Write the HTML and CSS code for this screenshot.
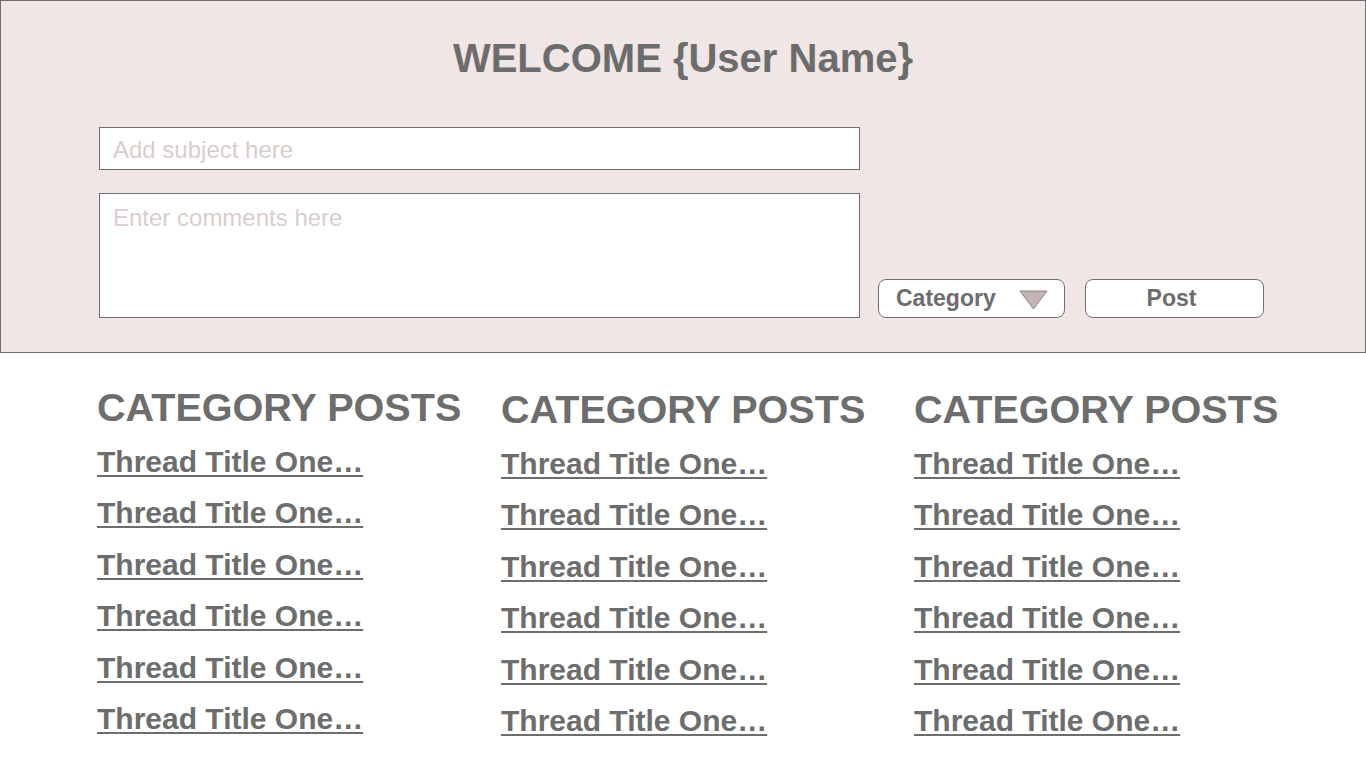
FILE: index.html
```html
<!DOCTYPE html>
<html lang="en">
<head>
<meta charset="utf-8">
<title>Forum</title>
<link rel="stylesheet" href="styles.css">
</head>
<body>
<header class="composer">
  <h1 class="welcome">WELCOME {User Name}</h1>
  <form class="composer-form">
    <div class="fields">
      <input class="subject" type="text" placeholder="Add subject here">
      <textarea class="comments" placeholder="Enter comments here"></textarea>
    </div>
    <div class="actions">
      <button type="button" class="btn btn-category">
        <span>Category</span>
        <svg class="caret" width="29" height="20" viewBox="0 0 29 20" aria-hidden="true">
          <polygon points="1,1 28,1 14.5,19" fill="#c3b4b3" stroke="#8d8484" stroke-width="1"/>
        </svg>
      </button>
      <button type="button" class="btn btn-post">Post</button>
    </div>
  </form>
</header>
<main class="categories">
  <section class="col">
    <h2 class="col-title">CATEGORY POSTS</h2>
    <ul class="threads">
      <li><a href="#">Thread Title One…</a></li>
      <li><a href="#">Thread Title One…</a></li>
      <li><a href="#">Thread Title One…</a></li>
      <li><a href="#">Thread Title One…</a></li>
      <li><a href="#">Thread Title One…</a></li>
      <li><a href="#">Thread Title One…</a></li>
    </ul>
  </section>
  <section class="col col-low">
    <h2 class="col-title">CATEGORY POSTS</h2>
    <ul class="threads">
      <li><a href="#">Thread Title One…</a></li>
      <li><a href="#">Thread Title One…</a></li>
      <li><a href="#">Thread Title One…</a></li>
      <li><a href="#">Thread Title One…</a></li>
      <li><a href="#">Thread Title One…</a></li>
      <li><a href="#">Thread Title One…</a></li>
    </ul>
  </section>
  <section class="col col-low">
    <h2 class="col-title">CATEGORY POSTS</h2>
    <ul class="threads">
      <li><a href="#">Thread Title One…</a></li>
      <li><a href="#">Thread Title One…</a></li>
      <li><a href="#">Thread Title One…</a></li>
      <li><a href="#">Thread Title One…</a></li>
      <li><a href="#">Thread Title One…</a></li>
      <li><a href="#">Thread Title One…</a></li>
    </ul>
  </section>
</main>
</body>
</html>
```
FILE: styles.css
```css
* { box-sizing: border-box; }

html, body {
  margin: 0;
  padding: 0;
  background: #ffffff;
  font-family: "Liberation Sans", Arial, Helvetica, sans-serif;
  color: #6d6d6d;
}

.composer {
  height: 353px;
  background: #efe6e5;
  border: 1px solid #707070;
  padding: 37px 0 0 98px;
}

.welcome {
  margin: 0 0 0 -98px;
  text-align: center;
  font-size: 40px;
  line-height: 40px;
  font-weight: bold;
  color: #6c6c6c;
}

.composer-form {
  margin-top: 49px;
  display: flex;
  align-items: flex-end;
}

.fields {
  width: 761px;
  display: flex;
  flex-direction: column;
  gap: 23px;
}

.subject,
.comments {
  display: block;
  width: 100%;
  margin: 0;
  border: 1px solid #707070;
  border-radius: 0;
  background: #ffffff;
  font-family: inherit;
  font-size: 24px;
  color: #6d6d6d;
  outline: none;
}

.subject {
  height: 43px;
  padding: 2px 13px 0;
}

.comments {
  height: 125px;
  padding: 10px 13px;
  resize: none;
  overflow: hidden;
}

.subject::placeholder,
.comments::placeholder {
  color: #d9cdcc;
  opacity: 1;
}

.actions {
  display: flex;
  gap: 20px;
  margin-left: 18px;
}

.btn {
  height: 39px;
  background: #ffffff;
  border: 1px solid #707070;
  border-radius: 8px;
  font-family: inherit;
  font-size: 23px;
  font-weight: bold;
  color: #6d6d6d;
  padding: 0;
  margin: 0;
}

.btn-category {
  width: 187px;
  display: flex;
  align-items: center;
  padding: 0 16px 0 17px;
}

.caret {
  margin-left: auto;
  margin-top: 2px;
  display: block;
}

.btn-post {
  width: 179px;
  padding-right: 6px;
}

.categories {
  display: grid;
  grid-template-columns: 404px 413px 1fr;
  padding: 35px 0 0 97px;
}

.col-low {
  padding-top: 2px;
}

.col-title {
  margin: 0 0 9px;
  font-size: 39.6px;
  line-height: 39px;
  font-weight: bold;
  color: #6d6d6d;
  white-space: nowrap;
}

.threads {
  list-style: none;
  margin: 0;
  padding: 0;
}

.threads li {
  height: 51.4px;
  line-height: 51.4px;
}

.threads a {
  font-size: 30px;
  font-weight: bold;
  color: #6d6d6d;
  text-decoration: underline;
  text-decoration-thickness: 2px;
  text-underline-offset: 3px;
  white-space: nowrap;
}
```
